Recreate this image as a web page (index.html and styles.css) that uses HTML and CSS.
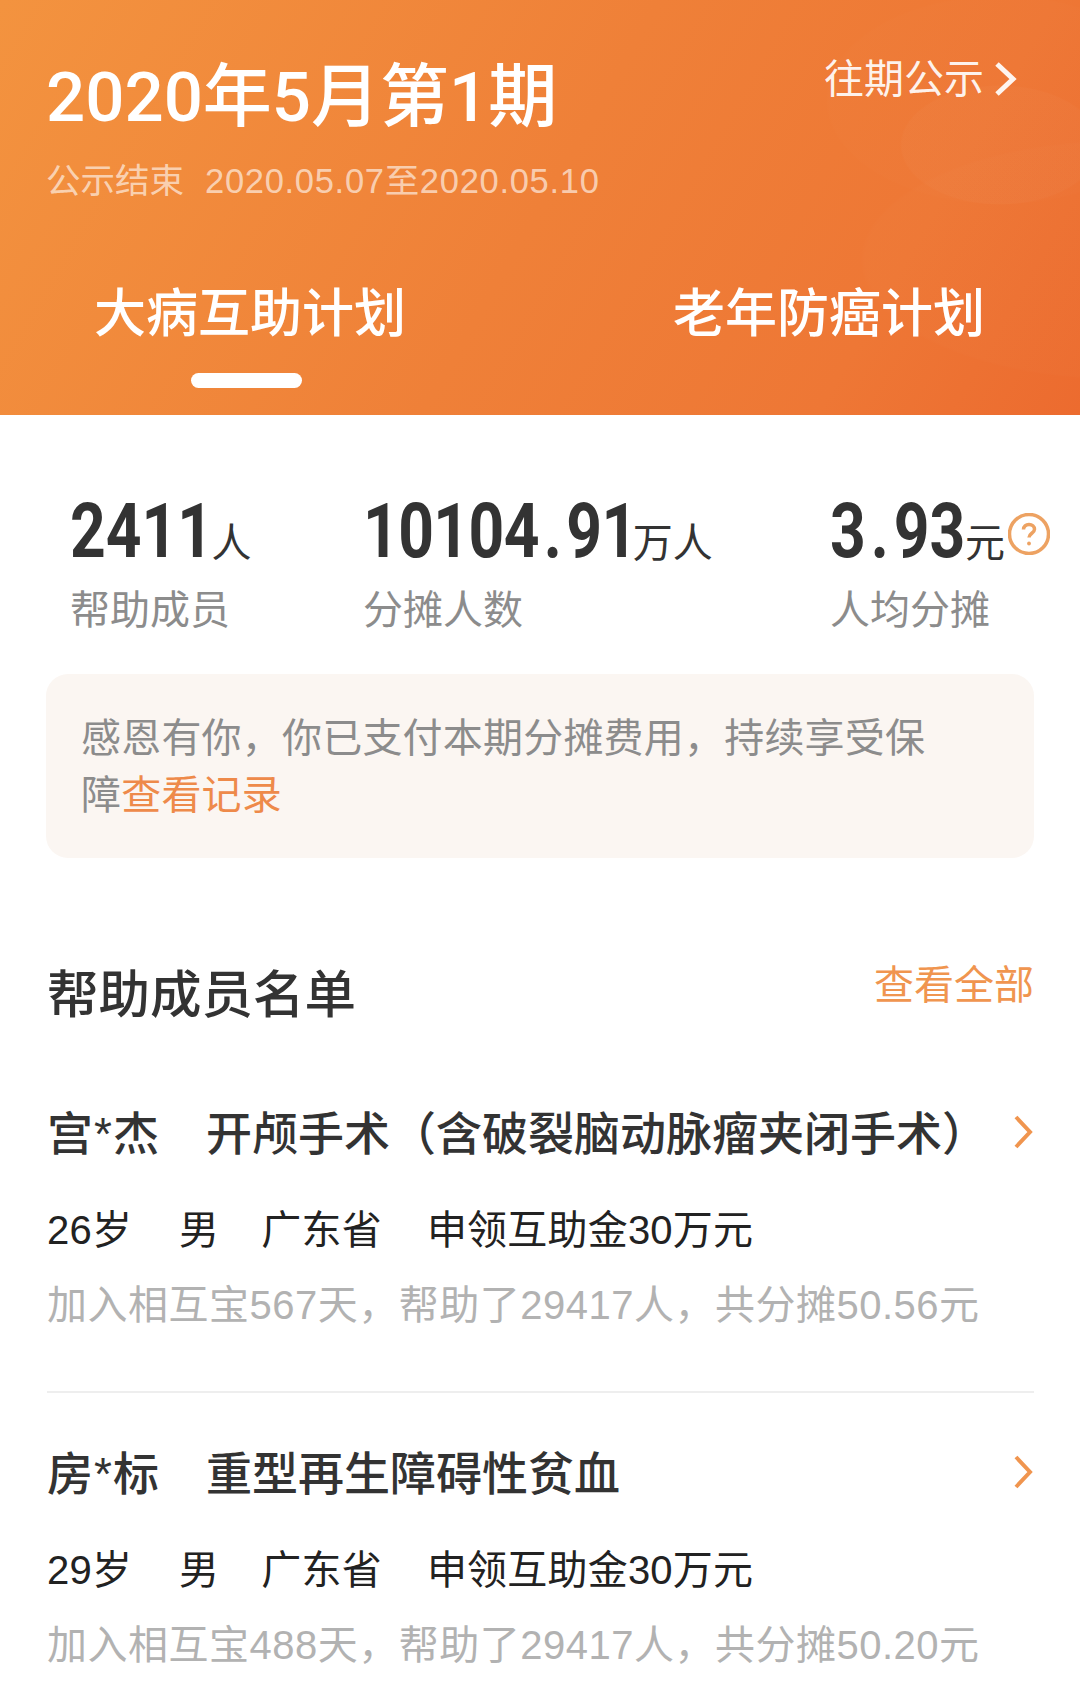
FILE: index.html
```html
<!DOCTYPE html>
<html lang="zh-CN">
<head>
<meta charset="utf-8">
<title>2020年5月第1期</title>
<link rel="stylesheet" href="styles.css">
</head>
<body>
<div class="page">
  <header class="hero">
    <div class="hero-top">
      <div>
        <h1 class="hero-title">2020年5月第1期</h1>
        <p class="hero-sub"><span class="hero-status">公示结束</span><span class="hero-date">2020.05.07至2020.05.10</span></p>
      </div>
      <a class="hero-link">往期公示
        <svg class="hero-chev" viewBox="0 0 24 36"><path d="M4 3l16 15L4 33"/></svg>
      </a>
    </div>
    <nav class="tabs">
      <div class="tab tab-active">大病互助计划<i class="tab-bar"></i></div>
      <div class="tab">老年防癌计划</div>
    </nav>
  </header>

  <section class="stats">
    <div class="stat stat-a">
      <div class="stat-value"><b>2411</b><span>人</span></div>
      <div class="stat-label">帮助成员</div>
    </div>
    <div class="stat stat-b">
      <div class="stat-value"><b>10104<i class="dot">.</i>91</b><span>万人</span></div>
      <div class="stat-label">分摊人数</div>
    </div>
    <div class="stat stat-c">
      <div class="stat-value"><b>3<i class="dot">.</i>93</b><span>元</span>
        <svg class="help" viewBox="0 0 42 42"><circle cx="21" cy="21" r="19.500"/><path d="M15.500 16.500c0-3.200 2.400-5 5.500-5s5.500 1.800 5.500 4.800c0 3.900-5.500 4-5.500 8.200"/><circle class="help-dot" cx="21" cy="30.500" r="1.900"/></svg>
      </div>
      <div class="stat-label">人均分摊</div>
    </div>
  </section>

  <div class="notice">感恩有你，你已支付本期分摊费用，持续享受保障<a class="notice-link">查看记录</a></div>

  <section class="list">
    <div class="list-head">
      <h2 class="list-title">帮助成员名单</h2>
      <a class="list-all">查看全部</a>
    </div>

    <article class="item">
      <div class="item-title">
        <span class="item-name">宫*杰</span>
        <span class="item-ill">开颅手术（含破裂脑动脉瘤夹闭手术）</span>
        <svg class="item-chev" viewBox="0 0 20 36"><path d="M3 3l14 15L3 33"/></svg>
      </div>
      <div class="item-meta"><span>26岁</span><span>男</span><span>广东省</span><span>申领互助金30万元</span></div>
      <div class="item-note">加入相互宝567天，帮助了29417人，共分摊50.56元</div>
    </article>

    <article class="item">
      <div class="item-title">
        <span class="item-name">房*标</span>
        <span class="item-ill">重型再生障碍性贫血</span>
        <svg class="item-chev" viewBox="0 0 20 36"><path d="M3 3l14 15L3 33"/></svg>
      </div>
      <div class="item-meta"><span>29岁</span><span>男</span><span>广东省</span><span>申领互助金30万元</span></div>
      <div class="item-note">加入相互宝488天，帮助了29417人，共分摊50.20元</div>
    </article>
  </section>
</div>
</body>
</html>
```
FILE: styles.css
```css
* { box-sizing: border-box; margin: 0; padding: 0; }
html, body { background: #fff; }
body { font-family: "Liberation Sans", "Noto Sans CJK SC", sans-serif; }
.page { width: 1080px; height: 1698px; overflow: hidden; }

.hero {
  height: 415px;
  padding: 58px 63px 0 46px;
  color: #fff;
  background:
    radial-gradient(ellipse 100px 60px at 1000px 145px, rgba(255,255,255,.018) 0 98%, transparent 100%),
    radial-gradient(ellipse 175px 105px at 1000px 100px, rgba(255,255,255,.008) 0 98%, transparent 100%),
    radial-gradient(ellipse 260px 120px at 1120px 260px, rgba(255,255,255,.012) 0 98%, transparent 100%),
    linear-gradient(120deg, #f3933f 0%, #ef8038 50%, #ee7735 80%, #ec6b2f 100%);
  display: flex;
  flex-direction: column;
}
.hero-top { display: flex; justify-content: space-between; align-items: flex-start; }
.hero-title { font-family: Roboto, "Noto Sans CJK SC", sans-serif; font-size: 69px; line-height: 80px; font-weight: 500; }
.hero-sub { font-size: 34.500px; line-height: 40px; margin-top: 23px; color: rgba(255,255,255,.62); }
.hero-status { margin-right: 21px; }
.hero-date { letter-spacing: .7px; }
.hero-link { display: flex; align-items: center; gap: 9px; font-size: 40px; line-height: 48px; margin-top: -3px; color: rgba(255,255,255,.92); }
.hero-chev { width: 24px; height: 36px; fill: none; stroke: rgba(255,255,255,.92); stroke-width: 5; }

.tabs { display: flex; justify-content: space-between; padding: 0 32px 0 48px; margin-top: 83px; }
.tab { position: relative; font-size: 52px; line-height: 60px; font-weight: 500; }
.tab-bar { position: absolute; left: 97px; top: 89px; width: 111px; height: 15px; border-radius: 8px; background: #fff; }

.stats { display: flex; padding: 78px 0 0 70px; }
.stat-a { width: 293px; }
.stat-b { width: 467px; }
.stat-value { display: flex; align-items: baseline; height: 76px; color: #333; }
.stat-value b { display: inline-block; transform: scaleX(.82); transform-origin: left center; font-family: Roboto, sans-serif; font-size: 76px; line-height: 76px; font-weight: 700; }
.stat-a b { margin-right: -35px; }
.stat-b b { margin-right: -66px; letter-spacing: -.7px; }
.stat-c b { margin-right: -32px; }
.dot { font-style: normal; margin: 0 6px; }
.stat-value span { font-size: 40px; margin-left: 2px; }
.help { width: 42px; height: 42px; margin: 6px 0 0 3px; align-self: center; fill: none; stroke: #eda262; stroke-width: 3.500; }
.help-dot { fill: #eda262; stroke: none; }
.stat-label { font-size: 40px; line-height: 48px; color: #8c8c8c; margin-top: 17px; }

.notice {
  margin: 40px 46px 0 46px;
  height: 184px;
  padding: 36px 80px 0 35px;
  background: #fbf6f2;
  border-radius: 22px;
  font-size: 40px;
  letter-spacing: .2px;
  line-height: 57px;
  color: #8c8c8c;
}
.notice-link { color: #ee8a4a; }

.list { padding: 0 46px 0 47px; }
.list-head { display: flex; justify-content: space-between; align-items: flex-start; margin: 103px 0 24px; }
.list-title { font-size: 51.500px; line-height: 68px; font-weight: 500; color: #333; }
.list-all { font-size: 40px; line-height: 50px; margin-top: -1px; color: #f0954f; }

.item { border-bottom: 2px solid #eeeeee; height: 339.500px; padding-top: 47px; }
.item:last-child { border-bottom: 0; }
.item-title { display: flex; align-items: center; height: 60px; font-size: 46px; font-weight: 500; color: #333; }
.item-name { width: 159px; letter-spacing: 1px; }
.item-ill { flex: 1; }
.item-chev { width: 20px; height: 36px; margin: 4px 1px 0 0; fill: none; stroke: #f0954f; stroke-width: 4; }
.item-meta { display: flex; gap: 45px; font-size: 40px; line-height: 50px; letter-spacing: .2px; color: #222; margin-top: 45px; }
.item-meta span:first-child { margin-right: 2px; }
.item-meta span:nth-child(2) { margin-right: -3px; }
.item-note { font-size: 40px; line-height: 50px; letter-spacing: .5px; color: #b2b2b2; margin-top: 25px; }
```
